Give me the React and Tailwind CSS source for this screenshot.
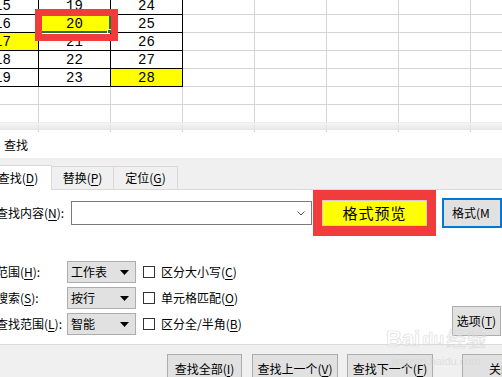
import React from 'react';

const rows = [
  ['15', '19', '24'],
  ['16', '20', '25'],
  ['17', '21', '26'],
  ['18', '22', '27'],
  ['19', '23', '28'],
  [], [], [],
];
const yellow = { '2-0': true, '1-1': true, '4-2': true };

const Key = ({ children }) => <span className="underline underline-offset-2">{children}</span>;

const Triangle = () => (
  <svg width="9" height="5" viewBox="0 0 9 5" className="shrink-0">
    <polygon points="0,0 9,0 4.5,5" fill="#000" />
  </svg>
);

const SelectRow = ({ label, value, check }) => (
  <div className="flex items-center h-[22px]">
    <div className="-ml-[4px] w-[71px]">{label}</div>
    <div className="w-[69px] h-[22px] bg-[#e1e1e1] border border-[#adadad] flex items-center justify-between pl-[3px] pr-[6px]">
      <span>{value}</span>
      <Triangle />
    </div>
    <div className="ml-[7px] w-[12px] h-[12px] border border-[#333] bg-white" />
    <div className="ml-[6px]">{check}</div>
  </div>
);

const Btn = ({ children, className = '' }) => (
  <div className={`h-[30px] bg-[#e1e1e1] border border-[#adadad] flex items-center justify-center shrink-0 ${className}`}>
    {children}
  </div>
);

export default function App() {
  return (
    <div className="w-[502px] h-[377px] overflow-hidden bg-white flex flex-col relative text-[12px] text-black font-['Noto_Sans_CJK_SC','Liberation_Sans',sans-serif]">
      {/* sheet */}
      <div className="h-[132px] relative overflow-hidden shrink-0">
        <div className="-ml-[33px] -mt-[3px] flex flex-col">
          {rows.map((r, ri) => (
            <div key={ri} className="flex">
              {Array.from({ length: 8 }).map((_, ci) => {
                const data = ri < 5 && ci < 3;
                return (
                  <div
                    key={ci}
                    className={`relative w-[72px] h-[18px] shrink-0 border-r border-b flex items-center justify-center font-['Liberation_Mono',monospace] text-[14px] leading-none ${data ? 'border-black' : 'border-[#d4d4d4]'} ${yellow[`${ri}-${ci}`] ? 'bg-[#ffff00]' : ''}`}
                  >
                    {r[ci]}
                    {ri === 1 && ci === 1 && (
                      <div className="absolute -left-px -top-px w-[73px] h-[19px] border-2 border-[#217346]">
                        <div className="absolute -right-[3px] -bottom-[3px] w-[5px] h-[5px] bg-[#217346] border border-white" />
                      </div>
                    )}
                  </div>
                );
              })}
            </div>
          ))}
        </div>
        <div className="absolute left-0 right-0 top-[122px] h-[8px] bg-gradient-to-b from-[#f4f4f4cc] to-[#e2e2e2cc]" />
        <div className="absolute left-[35px] top-[9px] w-[83px] h-[32px] border-[7px] border-[#f23b3b]" />
      </div>

      {/* title */}
      <div className="h-[26px] flex items-center pl-[4px] text-[12px] shrink-0">查找</div>

      {/* tabs */}
      <div className="h-[32px] bg-[#f0f0f0] border-b border-[#d9d9d9] flex items-end shrink-0">
        <div className="relative -mb-px -ml-[15px] w-[67px] h-[25px] bg-white border-t border-r border-[#d9d9d9] flex items-center justify-center">
          查找(<Key>D</Key>)
        </div>
        <div className="w-[62px] h-[23px] border-t border-r border-[#d9d9d9] flex items-center justify-center">
          替换(<Key>P</Key>)
        </div>
        <div className="w-[64px] h-[23px] border-t border-r border-[#d9d9d9] flex items-center justify-center">
          定位(<Key>G</Key>)
        </div>
      </div>

      {/* content */}
      <div className="h-[154px] shrink-0 flex flex-col pt-[8px]">
        <div className="flex items-center h-[30px]">
          <div className="-ml-[4px] w-[77px]">查找内容(<Key>N</Key>):</div>
          <div className="w-[249px] h-[24px] border border-[#7a7a7a] bg-white flex items-center justify-end pr-[6px]">
            <svg width="8" height="5" viewBox="0 0 8 5">
              <polyline points="0.5,0.5 4,4 7.5,0.5" fill="none" stroke="#555" strokeWidth="1" />
            </svg>
          </div>
          <div className="ml-[1px] w-[123px] h-[46px] border-x-[9px] border-y-[10px] border-[#f23b3b] shrink-0">
            <div className="w-full h-full bg-[#ffff00] border border-[#cfcfcf] flex items-center justify-center text-[15px] tracking-[1px]">
              格式预览
            </div>
          </div>
          <div className="ml-[6px] w-[60px] h-[30px] border-2 border-[#0078d7] bg-[#e1e1e1] flex items-center pl-[8px] shrink-0 whitespace-nowrap">
            格式(M
          </div>
        </div>

        <div className="flex items-end mt-[33px]">
          <div className="flex flex-col gap-[4px]">
            <SelectRow label={<>范围(<Key>H</Key>):</>} value="工作表" check={<>区分大小写(<Key>C</Key>)</>} />
            <SelectRow label={<>搜索(<Key>S</Key>):</>} value="按行" check={<>单元格匹配(<Key>O</Key>)</>} />
            <SelectRow label={<>查找范围(<Key>L</Key>):</>} value="智能" check={<>区分全/半角(<Key>B</Key>)</>} />
          </div>
          <Btn className="ml-auto mr-px w-[49px] -mb-px">选项(<Key>T</Key>)</Btn>
        </div>
      </div>

      {/* footer */}
      <div className="flex-1 bg-[#f0f0f0] border-t border-[#dcdcdc] pt-[9px] pl-[167px] flex items-start">
        <Btn className="w-[75px]">查找全部(<Key>I</Key>)</Btn>
        <Btn className="ml-[10px] w-[86px]">查找上一个(<Key>V</Key>)</Btn>
        <Btn className="ml-[9px] w-[86px]">查找下一个(<Key>F</Key>)</Btn>
        <Btn className="ml-[29px] w-[75px] justify-start pl-[26px]">关闭</Btn>
      </div>

      {/* watermark */}
      <div className="absolute left-[386px] top-[328px] pointer-events-none flex flex-col items-center text-white/50 [-webkit-text-stroke:0.7px_#d2d2d2] opacity-70">
        <div className="flex items-center gap-[2px] text-[22px] font-bold leading-none font-['Liberation_Sans',sans-serif]">
          <span>Bai</span>
          <span className="text-[18px]">du</span>
          <span className="text-[20px] font-normal font-['Noto_Sans_CJK_SC',sans-serif]">经验</span>
        </div>
        <div className="text-[11px] leading-none mt-[6px] font-['Liberation_Sans',sans-serif] [-webkit-text-stroke:0px] text-[#d8d8d8]">jingyan.baidu.com</div>
      </div>
    </div>
  );
}
